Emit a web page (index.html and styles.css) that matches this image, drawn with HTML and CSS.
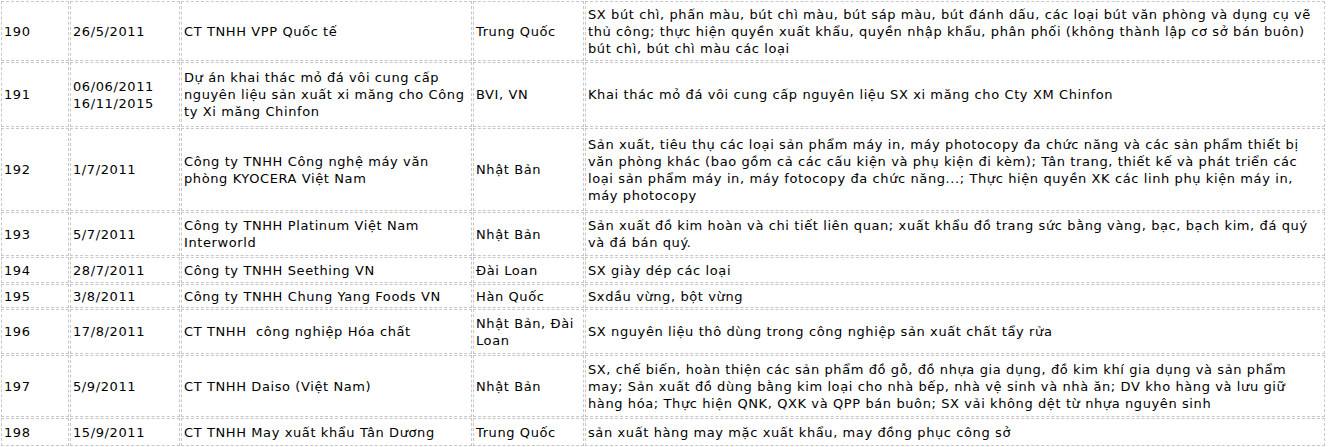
FILE: index.html
```html
<!DOCTYPE html>
<html lang="vi">
<head>
<meta charset="utf-8">
<title>Danh sách dự án</title>
<link rel="stylesheet" href="styles.css">
</head>
<body>
<table class="list">
  <colgroup>
    <col class="c-no">
    <col class="c-date">
    <col class="c-name">
    <col class="c-country">
    <col class="c-desc">
  </colgroup>
  <tbody>
    <tr class="r60">
      <td>190</td>
      <td>26/5/2011</td>
      <td>CT TNHH VPP Quốc tế</td>
      <td>Trung Quốc</td>
      <td>SX bút chì, phấn màu, bút chì màu, bút sáp màu, bút đánh dấu, các loại bút văn phòng và dụng cụ vẽ thủ công; thực hiện quyền xuất khẩu, quyền nhập khẩu, phân phối (không thành lập cơ sở bán buôn) bút chì, bút chì màu các loại</td>
    </tr>
    <tr class="r65">
      <td>191</td>
      <td>06/06/2011<br>16/11/2015</td>
      <td>Dự án khai thác mỏ đá vôi cung cấp nguyên liệu sản xuất xi măng cho Công ty Xi măng Chinfon</td>
      <td>BVI, VN</td>
      <td>Khai thác mỏ đá vôi cung cấp nguyên liệu SX xi măng cho Cty XM Chinfon</td>
    </tr>
    <tr class="r83">
      <td>192</td>
      <td>1/7/2011</td>
      <td>Công ty TNHH Công nghệ máy văn phòng KYOCERA Việt Nam</td>
      <td>Nhật Bản</td>
      <td>Sản xuất, tiêu thụ các loại sản phẩm máy in, máy photocopy đa chức năng và các sản phẩm thiết bị văn phòng khác (bao gồm cả các cấu kiện và phụ kiện đi kèm); Tân trang, thiết kế và phát triển các loại sản phẩm máy in, máy fotocopy đa chức năng...; Thực hiện quyền XK các linh phụ kiện máy in, máy photocopy</td>
    </tr>
    <tr class="r44">
      <td>193</td>
      <td>5/7/2011</td>
      <td>Công ty TNHH Platinum Việt Nam Interworld</td>
      <td>Nhật Bản</td>
      <td>Sản xuất đồ kim hoàn và chi tiết liên quan; xuất khẩu đồ trang sức bằng vàng, bạc, bạch kim, đá quý và đá bán quý.</td>
    </tr>
    <tr class="r26">
      <td>194</td>
      <td>28/7/2011</td>
      <td>Công ty TNHH Seething VN</td>
      <td>Đài Loan</td>
      <td>SX giày dép các loại</td>
    </tr>
    <tr class="r24">
      <td>195</td>
      <td>3/8/2011</td>
      <td>Công ty TNHH Chung Yang Foods VN</td>
      <td>Hàn Quốc</td>
      <td>Sxdầu vừng, bột vừng</td>
    </tr>
    <tr class="r45">
      <td>196</td>
      <td>17/8/2011</td>
      <td>CT TNHH &nbsp;công nghiệp Hóa chất</td>
      <td>Nhật Bản, Đài Loan</td>
      <td>SX nguyên liệu thô dùng trong công nghiệp sản xuất chất tẩy rửa</td>
    </tr>
    <tr class="r62">
      <td>197</td>
      <td>5/9/2011</td>
      <td>CT TNHH Daiso (Việt Nam)</td>
      <td>Nhật Bản</td>
      <td>SX, chế biến, hoàn thiện các sản phẩm đồ gỗ, đồ nhựa gia dụng, đồ kim khí gia dụng và sản phẩm may; Sản xuất đồ dùng bằng kim loại cho nhà bếp, nhà vệ sinh và nhà ăn; DV kho hàng và lưu giữ hàng hóa; Thực hiện QNK, QXK và QPP bán buôn; SX vải không dệt từ nhựa nguyên sinh</td>
    </tr>
    <tr class="r28">
      <td>198</td>
      <td>15/9/2011</td>
      <td>CT TNHH May xuất khẩu Tân Dương</td>
      <td>Trung Quốc</td>
      <td>sản xuất hàng may mặc xuất khẩu, may đồng phục công sở</td>
    </tr>
  </tbody>
</table>
</body>
</html>
```

FILE: styles.css
```css
html, body {
  margin: 0;
  padding: 0;
  background: #ffffff;
}

body {
  padding: 1px 0 0 1px;
  font-family: "DejaVu Sans", Verdana, sans-serif;
  font-size: 13px;
  letter-spacing: 0.6px;
  color: #000000;
}

.list {
  table-layout: fixed;
  width: 1326px;
  border-collapse: separate;
  border-spacing: 1px;
  margin: -1px 0 0 -1px;
}

.c-no { width: 68px; }
.c-date { width: 110px; }
.c-name { width: 291px; }
.c-country { width: 111px; }
.c-desc { width: 740px; }

.list td {
  border: 1px dashed #c8c8c8;
  padding: 0 1px 0 2px;
  line-height: 17px;
  vertical-align: middle;
  text-align: left;
}

.r60 { height: 60px; }
.r65 { height: 65px; }
.r83 { height: 83px; }
.r44 { height: 44px; }
.r26 { height: 26px; }
.r24 { height: 24px; }
.r45 { height: 45px; }
.r62 { height: 62px; }
.r28 { height: 28px; }
```
